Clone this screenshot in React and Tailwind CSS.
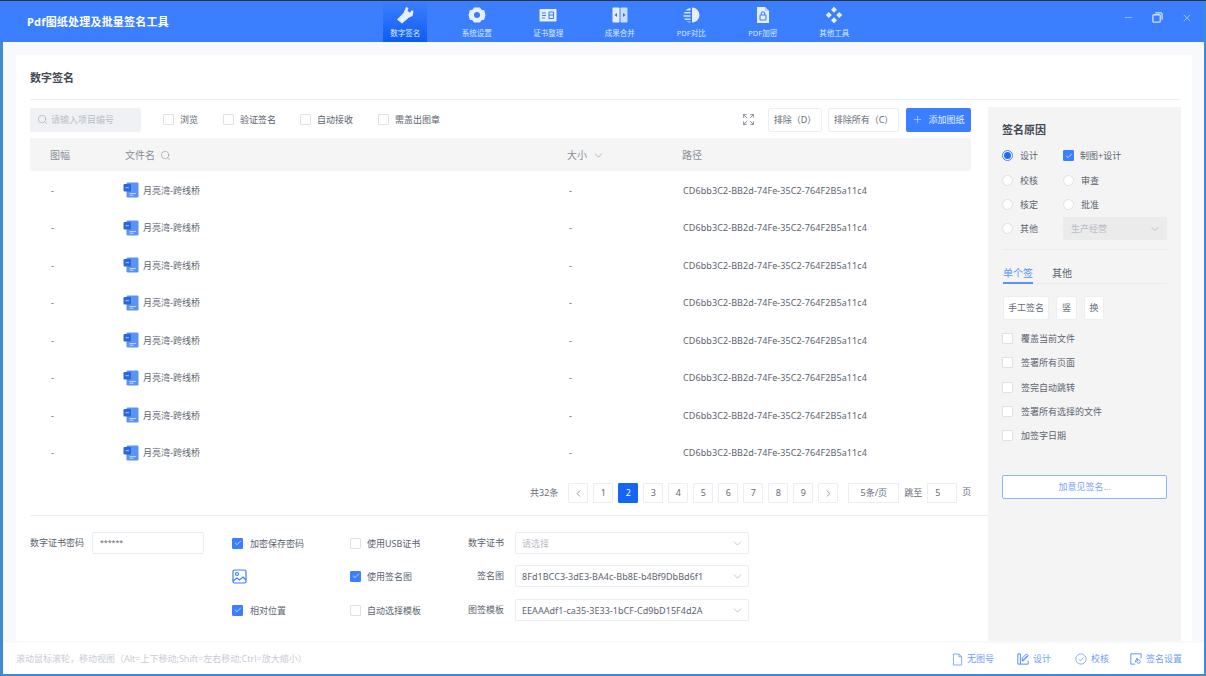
import { ChevronDown, ChevronLeft, ChevronRight, Search, Plus, Minus, X, Check, Expand } from "lucide-react";

const font = { fontFamily: '"Noto Sans", "Noto Sans CJK SC", sans-serif' };

const navItems = [
  { label: "数字签名", icon: "wrench", active: true },
  { label: "系统设置", icon: "gear" },
  { label: "证书整理", icon: "card" },
  { label: "成果合并", icon: "merge" },
  { label: "PDF对比", icon: "compare" },
  { label: "PDF加密", icon: "lock" },
  { label: "其他工具", icon: "diamonds" },
];

const NavIcon = ({ name }) => {
  const cls = "w-[18px] h-[18px]";
  if (name === "wrench")
    return (
      <svg viewBox="0 0 18 18" className={cls} fill="#e6eeff">
        <path d="M10 1l2.500 1-1 3 2.500 1.500L16 4l1.500 1.500-1 4.500-3.500 1.500L6 17.500 1 13.500l6.500-6.500z" />
      </svg>
    );
  if (name === "gear")
    return (
      <svg viewBox="0 0 18 18" className={cls}>
        <path fill="#e6eeff" fillRule="evenodd" d="M6 1.500h6l1.500 2.200 2.700.5L17.500 9l-1.300 4.800-2.700.5L12 16.500H6l-1.500-2.200-2.700-.5L.5 9l1.300-4.800 2.700-.5zM9 6a3 3 0 100 6 3 3 0 000-6z" />
      </svg>
    );
  if (name === "card")
    return (
      <svg viewBox="0 0 18 18" className={cls}>
        <rect x="0.5" y="3" width="17" height="12.500" rx="1" fill="#e6eeff" />
        <path d="M3 7h4M3 9.500h4M3 12h3" stroke="#3b7fff" strokeWidth="1.100" />
        <rect x="10" y="6" width="4.500" height="6.500" rx="0.600" fill="none" stroke="#3b7fff" strokeWidth="1.100" />
        <path d="M10 9h4.500" stroke="#3b7fff" strokeWidth="1" />
      </svg>
    );
  if (name === "merge")
    return (
      <svg viewBox="0 0 18 18" className={cls}>
        <rect x="1.500" y="1.500" width="7" height="15" rx="1" fill="#e6eeff" />
        <rect x="9.500" y="1.500" width="7" height="15" rx="1" fill="#c9dbff" />
        <path d="M3.500 9l2.500-2v4zM14.500 9L12 7v4z" fill="#2f6fe8" />
      </svg>
    );
  if (name === "compare")
    return (
      <svg viewBox="0 0 18 18" className={cls}>
        <path d="M10 1.500a7.500 7.500 0 010 15z" fill="#e6eeff" />
        <path d="M8.500 2a7.500 7.500 0 00-5 2.500h5zM2.600 6h5.900v1.600H1.700zM1.400 9.200h7.100v1.600H1.600zM2.200 12.400h6.300V14H3.300zM4.600 15.400h3.900v1.100a7 7 0 01-3.900-1.100z" fill="#d5e3ff" />
      </svg>
    );
  if (name === "lock")
    return (
      <svg viewBox="0 0 18 18" className={cls}>
        <path d="M3 1h8l4 4v12H3z" fill="#e6eeff" />
        <path d="M11 1v4h4z" fill="#b9d0ff" />
        <rect x="6" y="9" width="6" height="5" rx="0.600" fill="none" stroke="#3b7fff" strokeWidth="1.100" />
        <path d="M7.300 9V7.500a1.700 1.700 0 013.400 0V9" fill="none" stroke="#3b7fff" strokeWidth="1.100" />
      </svg>
    );
  return (
    <svg viewBox="0 0 18 18" className={cls} fill="#e6eeff">
      <path d="M9 .8L12 3.800 9 6.800 6 3.800zM3.800 6L6.800 9 3.800 12 .8 9zM14.200 6L17.200 9 14.200 12 11.200 9zM9 11.200L12 14.200 9 17.200 6 14.200z" />
    </svg>
  );
};

const Box = ({ checked }) => (
  <span
    className={
      "w-[11px] h-[11px] shrink-0 rounded-[1px] flex items-center justify-center border " +
      (checked ? "bg-[#3b7fff] border-[#3b7fff]" : "bg-white border-[#dfe1e6]")
    }
  >
    {checked && <Check size={8} color="#fff" strokeWidth={2} />}
  </span>
);

const CheckItem = ({ label, checked, className = "" }) => (
  <label className={"flex items-center gap-[6px] text-[9px] leading-none text-[#5c6370] whitespace-nowrap " + className}>
    <Box checked={checked} />
    <span>{label}</span>
  </label>
);

const Radio = ({ label, checked, className = "" }) => (
  <label className={"flex items-center gap-[7px] text-[9px] leading-none text-[#5c6370] " + className}>
    <span className={"w-[11px] h-[11px] rounded-full bg-white border flex items-center justify-center " + (checked ? "border-[#3b7fff]" : "border-[#dfe1e6]")}>
      {checked && <span className="w-[7px] h-[7px] rounded-full bg-[#1f6bff]" />}
    </span>
    <span>{label}</span>
  </label>
);

const OutlineBtn = ({ children, className = "" }) => (
  <button className={"h-[24px] bg-white border border-[#eceef2] rounded-[2px] text-[9px] text-[#666c78] flex items-center justify-center whitespace-nowrap " + className}>
    {children}
  </button>
);

const FileIcon = () => (
  <svg viewBox="0 0 16 16" className="w-[16px] h-[16px] shrink-0">
    <rect x="3.500" y="0.500" width="12" height="15" rx="1.200" fill="#5b93f5" />
    <rect x="0.500" y="2" width="7.500" height="7.500" rx="1" fill="#2a66dc" />
    <path d="M2.500 5.700h3.500" stroke="#a9c6fb" strokeWidth="1" />
    <path d="M6.500 11.500h6.500M6.500 13.200h4" stroke="#d6e4fd" strokeWidth="0.800" />
  </svg>
);

const PageBtn = ({ children, active }) => (
  <span
    className={
      "w-[20px] h-[20px] flex items-center justify-center rounded-[1px] border text-[9px] " +
      (active ? "bg-[#1464f6] border-[#1464f6] text-white" : "bg-white border-[#eceef2] text-[#666c78]")
    }
  >
    {children}
  </span>
);

const SelectBox = ({ value, placeholder }) => (
  <div className="w-[234px] h-[22px] border border-[#eceef2] rounded-[1px] bg-white flex items-center justify-between pl-[6px] pr-[3px] text-[9px] tracking-[0.05px]">
    <span className={"pt-px " + (placeholder ? "text-[#b9bdc6]" : "text-[#5c6370]")}>{value}</span>
    <ChevronDown size={13} color="#a9aeb8" strokeWidth={1.25} className="mr-[1px]" />
  </div>
);

const rows = Array.from({ length: 8 });
const pages = [1, 2, 3, 4, 5, 6, 7, 8, 9];

const FooterItem = ({ icon, label, className = "" }) => (
  <div className={"flex items-center gap-[4px] text-[9px] text-[#6f9ef5] " + className}>
    {icon}
    <span>{label}</span>
  </div>
);

export default function App() {
  return (
    <div style={font} className="w-[1206px] h-[676px] overflow-hidden flex flex-col bg-[#3d8ad6] border-t border-t-[#2e3240] pl-[3px] pr-[2px] pb-[2px]">
      <header className="h-[41px] shrink-0 -ml-[3px] pl-[3px] bg-[#3b7fff] flex items-center relative">
        <div className="absolute -top-px left-[593px] w-[54px] h-px bg-[#f0385c]" />
        <div className="w-[366.500px] pl-[24px] pt-px text-[11px] font-bold text-white tracking-[0.2px]">Pdf图纸处理及批量签名工具</div>
        <nav className="flex h-full">
          {navItems.map((item) => (
            <div key={item.label} className="w-[71.500px] h-full flex justify-center">
              <div
                className={
                  "w-[44px] h-full flex flex-col items-center pt-[5px] gap-[3px] " +
                  (item.active ? "bg-gradient-to-b from-[#3b7fff] to-[#0b5cf5]" : "")
                }
              >
                <NavIcon name={item.icon} />
                <span className="text-[7.500px] leading-[12px] text-[#dfe9ff] whitespace-nowrap">{item.label}</span>
              </div>
            </div>
          ))}
        </nav>
        <div className="ml-auto -mt-[8px] flex items-center gap-[18px] pr-[11px] text-[#b9d2ff]">
          <Minus size={11} strokeWidth={1.5} />
          <svg viewBox="0 0 12 12" className="w-[11px] h-[11px]" fill="none" stroke="#cfe0ff" strokeWidth="1.400">
            <rect x="1" y="3" width="8" height="8" rx="1" />
            <path d="M3.500 1h6a1.500 1.500 0 011.500 1.500v6" />
          </svg>
          <X size={12} strokeWidth={1.5} />
        </div>
      </header>

      <main className="flex-1 min-h-0 bg-[#f7f9fd] pt-[13px] pb-[2px] pl-[13px] pr-[12px]">
        <div className="h-full bg-white flex flex-col pl-[14px] pr-[11px]">
          <div className="h-[45px] shrink-0 flex items-center pt-[2px] border-b border-b-[#eceef2] text-[11px] font-bold text-[#444a56]">数字签名</div>
          <div className="flex-1 min-h-0 flex pt-[7px]">
            <div className="w-[958px] shrink-0 flex flex-col">
              <div className="w-[941px] h-[25px] flex items-center">
                <div className="w-[111px] h-[24px] bg-[#f0f1f5] rounded-[2px] flex items-center gap-[3px] pl-[7px] text-[9px] text-[#b9bdc6]">
                  <Search size={11} strokeWidth={1.25} color="#9aa0ab" />
                  <span>请输入项目编号</span>
                </div>
                <CheckItem label="浏览" className="ml-[22px] w-[60px]" />
                <CheckItem label="验证签名" className="w-[77px]" />
                <CheckItem label="自动接收" className="w-[78px]" />
                <CheckItem label="需盖出图章" />
                <Expand size={13} color="#5c6370" strokeWidth={1.25} className="ml-auto mr-[13px]" />
                <OutlineBtn className="w-[54px]">排除（D）</OutlineBtn>
                <OutlineBtn className="w-[71px] ml-[6px]">排除所有（C）</OutlineBtn>
                <button className="w-[65px] h-[24px] ml-[7px] rounded-[2px] bg-[#3b7fff] text-[#e6eeff] text-[9px] flex items-center justify-center gap-[5px]">
                  <Plus size={11} strokeWidth={1.25} />
                  添加图纸
                </button>
              </div>

              <div className="w-[941px] mt-[6px]">
                <div className="h-[33px] pt-px bg-[#f5f5f5] grid grid-cols-[95px_442px_115px_1fr] items-center text-[10px] text-[#8a8f99]">
                  <span className="pl-[20px]">图幅</span>
                  <span className="flex items-center gap-[5px]">
                    文件名 <Search size={11} strokeWidth={1.25} />
                  </span>
                  <span className="flex items-center gap-[5px]">
                    大小 <ChevronDown size={13} strokeWidth={1.25} />
                  </span>
                  <span>路径</span>
                </div>
                {rows.map((_, i) => (
                  <div key={i} className="h-[37.500px] pt-px grid grid-cols-[95px_442px_115px_1fr] items-center text-[9px] text-[#5c6370]">
                    <span className="pl-[21px]">-</span>
                    <span className="flex items-center gap-[4px] -ml-[2px]">
                      <FileIcon />
                      月亮湾-跨线桥
                    </span>
                    <span className="pl-[2px]">-</span>
                    <span className="pl-px tracking-[0.09px]">CD6bb3C2-BB2d-74Fe-35C2-764F2B5a11c4</span>
                  </div>
                ))}
              </div>

              <div className="h-[45px] border-b border-b-[#eceef2] flex items-start pt-[12px] text-[9px] text-[#666c78]">
                <span className="ml-[500px] mr-[10px] leading-[20px]">共32条</span>
                <div className="flex gap-[5px]">
                  <PageBtn><ChevronLeft size={11} strokeWidth={1.5} /></PageBtn>
                  {pages.map((p) => (
                    <PageBtn key={p} active={p === 2}>{p}</PageBtn>
                  ))}
                  <PageBtn><ChevronRight size={11} strokeWidth={1.5} /></PageBtn>
                </div>
                <span className="ml-[10px] w-[51px] h-[20px] border border-[#eceef2] flex items-center justify-center">5条/页</span>
                <span className="ml-[5px] leading-[20px]">跳至</span>
                <span className="ml-[5px] w-[30px] h-[20px] border border-[#eceef2] flex items-center pl-[7px]">5</span>
                <span className="ml-[5px] leading-[18px]">页</span>
              </div>

              <div className="flex pt-[16px] text-[9px] text-[#5c6370]">
                <div className="w-[202px] flex items-start">
                  <span className="w-[62px] leading-[22px] whitespace-nowrap">数字证书密码</span>
                  <div className="w-[112px] h-[22px] border border-[#eceef2] rounded-[1px] flex items-center pl-[7px] text-[7px]">******</div>
                </div>
                <div className="w-[118px] flex flex-col">
                  <CheckItem label="加密保存密码" checked className="h-[22px] gap-[7px]" />
                  <div className="h-[22px] mt-[11px] flex items-center">
                    <svg viewBox="0 0 15 15" className="w-[15px] h-[15px]" fill="none" stroke="#3b7fff" strokeWidth="1.200">
                      <rect x="1" y="1" width="13" height="13" rx="1.500" />
                      <circle cx="5" cy="5" r="1.500" />
                      <path d="M1 12l4-3 2.500 2L11 8l3 3" />
                    </svg>
                  </div>
                  <CheckItem label="相对位置" checked className="h-[22px] mt-[12px] gap-[7px]" />
                </div>
                <div className="w-[118px] flex flex-col">
                  <CheckItem label="使用USB证书" className="h-[22px]" />
                  <CheckItem label="使用签名图" checked className="h-[22px] mt-[11px]" />
                  <CheckItem label="自动选择模板" className="h-[22px] mt-[12px]" />
                </div>
                <div className="flex flex-col">
                  {[
                    { label: "数字证书", value: "请选择", placeholder: true },
                    { label: "签名图", value: "8Fd1BCC3-3dE3-BA4c-Bb8E-b4Bf9DbBd6f1", gap: "mt-[11px]" },
                    { label: "图签模板", value: "EEAAAdf1-ca35-3E33-1bCF-Cd9bD15F4d2A", gap: "mt-[12px]" },
                  ].map((f) => (
                    <div key={f.label} className={"flex items-center " + (f.gap || "")}>
                      <span className="w-[36px] text-right mr-[11px] whitespace-nowrap">{f.label}</span>
                      <SelectBox value={f.value} placeholder={f.placeholder} />
                    </div>
                  ))}
                </div>
              </div>
            </div>

            <aside className="flex-1 bg-[#f4f4f5] pl-[14px] pr-[14px] pt-[16px]">
              <div className="text-[11px] font-bold leading-[14px] text-[#444a56]">签名原因</div>
              <div className="grid grid-cols-[61px_1fr] mt-[13px] gap-y-[13.500px]">
                <Radio label="设计" checked />
                <CheckItem label="制图+设计" checked />
                <Radio label="校核" />
                <Radio label="审查" />
                <Radio label="核定" />
                <Radio label="批准" />
              </div>
              <div className="grid grid-cols-[61px_1fr] items-center mt-[7px]">
                <Radio label="其他" />
                <div className="h-[23px] bg-[#ebebec] rounded-[1px] flex items-center justify-between pl-[8px] pr-[6px] text-[9px] text-[#b9bdc6]">
                  生产经营
                  <ChevronDown size={12} strokeWidth={1.25} color="#9aa0ab" />
                </div>
              </div>
              <div className="h-px bg-[#ebebec] mt-[9px]" />
              <div className="flex gap-[19px] mt-[16px] pl-px border-b border-b-[#ebebec] text-[10px] leading-[14px] text-[#5c6370]">
                <span className="text-[#5b93f5] border-b-2 border-b-[#5b93f5] pb-[2px] -mb-px">单个签</span>
                <span>其他</span>
              </div>
              <div className="flex gap-[7px] mt-[12px] pl-px">
                <OutlineBtn className="w-[46px]">手工签名</OutlineBtn>
                <OutlineBtn className="w-[21px]">竖</OutlineBtn>
                <OutlineBtn className="w-[20px]">换</OutlineBtn>
              </div>
              <div className="flex flex-col gap-[13.300px] mt-[13px]">
                {["覆盖当前文件", "签署所有页面", "签完自动跳转", "签署所有选择的文件", "加签字日期"].map((t) => (
                  <CheckItem key={t} label={t} className="gap-[8px]" />
                ))}
              </div>
              <button className="w-[165px] h-[24px] mt-[34px] bg-white border border-[#8db4fb] rounded-[2px] text-[9px] text-[#7ba6f7]">加意见签名...</button>
            </aside>
          </div>
        </div>
      </main>

      <footer className="h-[31px] shrink-0 bg-white flex items-center pt-px pl-[13px] pr-[22px] text-[9px] text-[#c8ccd4]">
        <span>滚动鼠标滚轮，移动视图（Alt=上下移动;Shift=左右移动;Ctrl=放大缩小）</span>
        <div className="ml-auto flex">
          <FooterItem
            className="w-[65px]"
            label="无图号"
            icon={
              <svg viewBox="0 0 12 14" className="w-[11px] h-[13px]" fill="none" stroke="#6f9ef5" strokeWidth="0.900">
                <path d="M1.500 1h6l3 3v9h-9zM7.500 1v3h3" />
              </svg>
            }
          />
          <FooterItem
            className="w-[58px]"
            label="设计"
            icon={
              <svg viewBox="0 0 14 14" className="w-[12px] h-[12px]" fill="none" stroke="#3b7fff" strokeWidth="1">
                <path d="M1 1h3v12H1zM4 13h9V9M6 9l6-6M6 9V6l5-5 2 2-5 6z" />
              </svg>
            }
          />
          <FooterItem
            className="w-[55px]"
            label="校核"
            icon={
              <svg viewBox="0 0 14 14" className="w-[12px] h-[12px]" fill="none" stroke="#6f9ef5" strokeWidth="0.900">
                <circle cx="7" cy="7" r="6" />
                <path d="M4.300 7.200l2 2 3.500-3.800" />
              </svg>
            }
          />
          <FooterItem
            label="签名设置"
            icon={
              <svg viewBox="0 0 14 14" className="w-[12px] h-[12px]" fill="none" stroke="#4f89f5" strokeWidth="1">
                <path d="M13 6V1H1v12h5" />
                <circle cx="10" cy="10" r="2" />
                <path d="M6 11l2-5 1 2" />
              </svg>
            }
          />
        </div>
      </footer>
    </div>
  );
}
